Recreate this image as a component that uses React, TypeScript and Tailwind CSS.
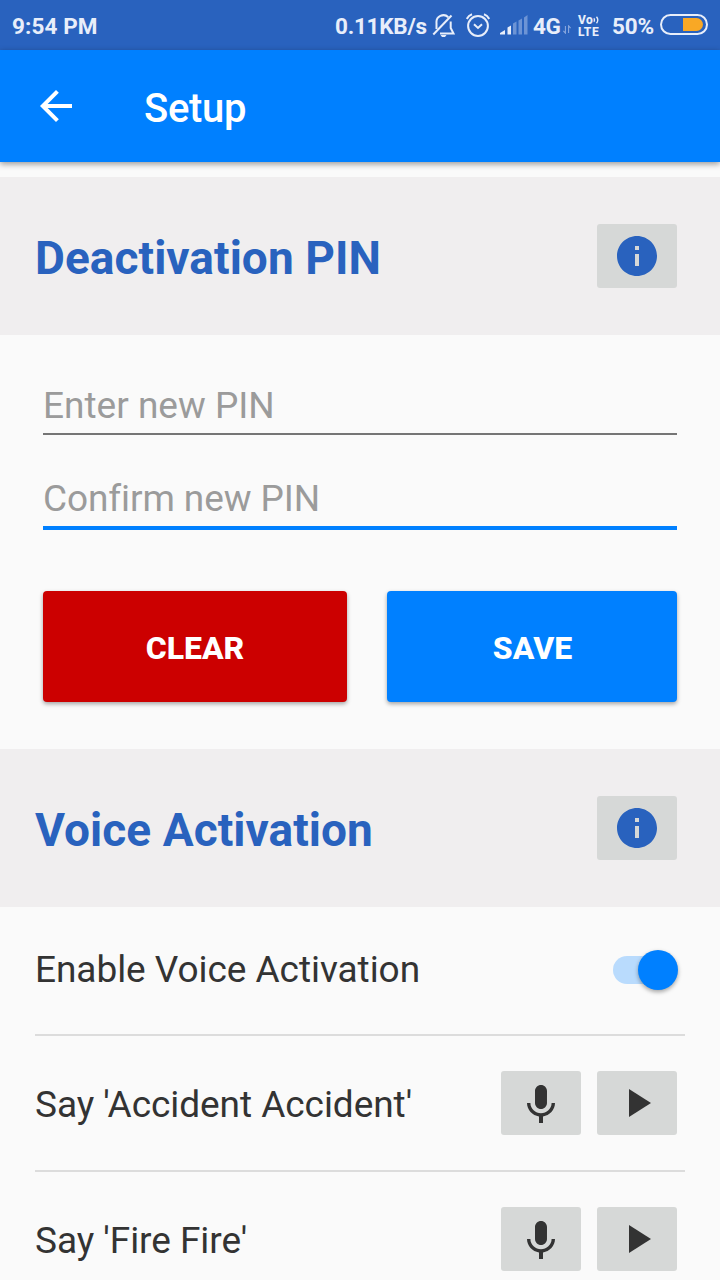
import type { ReactNode } from "react";

function StatusBar() {
  return (
    <div className="flex h-[50px] shrink-0 items-center bg-[#2962be] pr-3 pl-3 text-[22.5px] leading-[50px] font-bold text-[#e8eefa]">
      <span className="w-[323px] shrink-0 pt-px tracking-[0.1px] whitespace-nowrap">9:54 PM</span>
      <span className="w-[97px] shrink-0 pt-px tracking-[-0.25px] whitespace-nowrap">0.11KB/s</span>
      <svg className="mt-px h-[26px] w-6 shrink-0" viewBox="0 0 24 26" fill="none" stroke="#e8eefa" strokeWidth="2">
        <path d="M4.500 16V10a7 7 0 0 1 11.800-5.800M18.700 8.500V15l2.800 5.500H8" />
        <path d="M1.300 21.500 19.500 2.500" />
        <path d="M8.500 22h6l-1.500 2h-3z" fill="#e8eefa" stroke="none" />
      </svg>
      <svg className="ml-[10px] h-[26px] w-6 shrink-0" viewBox="0 0 24 26" fill="none" stroke="#e8eefa" strokeWidth="2">
        <circle cx="12" cy="14" r="9.900" />
        <path d="m8 12.300 4 3.700 4-3.700M.8 7C2 4.500 3.700 3 6 2.200M23.200 7C22 4.500 20.300 3 18 2.200" />
      </svg>
      <svg className="ml-[10px] h-[22px] w-7 shrink-0" viewBox="0 0 28 22">
        <path d="M0 20.500V19l5-3v4.500zM7.500 20.500v-7l3.500-2v9z" fill="#e8eefa" />
        <path d="M13 20.500v-11l3.500-2v13zM18.500 20.500v-14l3.500-2v16zM24 20.500V3.500L27.500 1v19.500z" fill="#6d94d5" />
      </svg>
      <span className="ml-[5px] w-[30px] shrink-0 pt-px tracking-[-0.5px] whitespace-nowrap">4G</span>
      <svg className="mt-[9px] h-[9px] w-[8px] shrink-0" viewBox="0 0 10 10" preserveAspectRatio="none" fill="none" stroke="#8eabe0" strokeWidth="1.300">
        <path d="M.5 6.500 3 9V1M9.500 3.500 7 1v8" />
      </svg>
      <span className="mt-px ml-[7px] flex w-[26px] shrink-0 flex-col font-extrabold">
        <span className="flex h-[12px] items-center text-[12px] leading-[12px] tracking-[0.4px] whitespace-nowrap">
          Vo
          <svg className="mt-px h-[8px] w-[7px] shrink-0" viewBox="0 0 8 9" fill="none" stroke="#e8eefa" strokeWidth="1.500">
            <path d="M1 2.500q1.500 2 0 4M4 .8q3 3.700 0 7.400" />
          </svg>
        </span>
        <span className="h-[12px] text-[12px] leading-[12px] tracking-[0.6px] whitespace-nowrap">LTE</span>
      </span>
      <span className="ml-[8px] w-[48px] shrink-0 pt-px tracking-[-0.1px] whitespace-nowrap">50%</span>
      <span className="mb-px flex h-[21px] w-12 shrink-0 items-center justify-end rounded-full border-2 border-[#e8eefa] pr-[3px]">
        <span className="h-[13px] w-5 rounded-l-[1px] rounded-r-full bg-[#f9a825]" />
      </span>
    </div>
  );
}

function AppBar() {
  return (
    <header className="relative flex h-28 shrink-0 items-center bg-[#0080ff] pl-10 text-white shadow-[0_2px_6px_rgba(0,0,0,0.4)]">
      <svg className="h-8 w-8" viewBox="4 4 16 16" fill="currentColor">
        <path d="M20 11H7.830l5.590-5.590L12 4l-8 8 8 8 1.410-1.410L7.830 13H20v-2z" />
      </svg>
      <h1 className="ml-[72px] pt-[6px] text-[40px] leading-[48px] font-medium tracking-[-0.3px]">Setup</h1>
    </header>
  );
}

function IconButton({ label, children }: { label: string; children: ReactNode }) {
  return (
    <button aria-label={label} className="flex h-16 w-20 items-center justify-center rounded-[3px] bg-[#d6d8d7] text-[#333333]">
      {children}
    </button>
  );
}

function SectionHeader({ title }: { title: string }) {
  return (
    <div className="flex h-[158px] shrink-0 items-center justify-between bg-[#f0eeef] pr-[43px] pl-[35px]">
      <h2 className="pt-1 text-[46px] leading-[54px] font-bold tracking-[0.05px] text-[#2962be]">{title}</h2>
      <IconButton label="Information">
        <svg className="h-12 w-12 text-[#2962be]" viewBox="0 0 24 24" fill="currentColor">
          <path d="M12 2C6.480 2 2 6.480 2 12s4.480 10 10 10 10-4.480 10-10S17.520 2 12 2zm1 15h-2v-6h2v6zm0-8h-2V7h2v2z" />
        </svg>
      </IconButton>
    </div>
  );
}

function VoiceRow({ phrase }: { phrase: string }) {
  return (
    <div className="mx-[35px] flex h-[136px] shrink-0 items-center border-b-2 border-[#dcdcdc] pr-2">
      <span className="flex-1 pt-1 text-[37px] leading-[44px] tracking-[-0.05px] whitespace-nowrap">{phrase}</span>
      <div className="flex gap-4">
        <IconButton label="Record">
          <svg className="h-12 w-12" viewBox="0 0 24 24" fill="currentColor">
            <path d="M12 15c1.660 0 2.990-1.340 2.990-3L15 6c0-1.660-1.340-3-3-3S9 4.340 9 6v6c0 1.660 1.340 3 3 3zm5.300-3c0 3-2.540 5.100-5.300 5.100S6.700 15 6.700 12H5c0 3.420 2.720 6.230 6 6.720V22h2v-3.280c3.280-.490 6-3.300 6-6.720h-1.700z" />
          </svg>
        </IconButton>
        <IconButton label="Play">
          <svg className="h-12 w-12" viewBox="0 0 24 24" fill="currentColor">
            <path d="M8 5v14l11-7z" />
          </svg>
        </IconButton>
      </div>
    </div>
  );
}

export default function App() {
  return (
    <div className="flex h-[1280px] w-[720px] flex-col overflow-hidden bg-[#fafafa] font-['Roboto',sans-serif] text-[#333333]">
      <StatusBar />
      <AppBar />
      <main className="flex flex-col pt-[15px]">
        <SectionHeader title="Deactivation PIN" />
        <div className="flex h-[414px] shrink-0 flex-col pr-[43px] pl-[43px]">
          <input
            aria-label="Enter new PIN"
            placeholder="Enter new PIN"
            className="h-[100px] shrink-0 border-b-2 border-[#757575] pt-[42px] text-[37px] outline-none placeholder:text-[#9b9b9b]"
          />
          <input
            aria-label="Confirm new PIN"
            placeholder="Confirm new PIN"
            className="h-[95px] shrink-0 border-b-4 border-[#0080ff] pt-[35px] text-[37px] tracking-[-0.1px] outline-none placeholder:text-[#9b9b9b]"
          />
          <div className="mt-[61px] flex gap-10 text-[32px] font-extrabold text-white">
            <button className="h-[111px] w-[304px] rounded-[4px] bg-[#cc0000] pt-[3px] shadow-[0_2px_4px_rgba(0,0,0,0.35)]">CLEAR</button>
            <button className="h-[111px] w-[290px] rounded-[4px] bg-[#0080ff] pt-[3px] pl-px shadow-[0_2px_4px_rgba(0,0,0,0.35)]">SAVE</button>
          </div>
        </div>
        <SectionHeader title="Voice Activation" />
        <div className="mx-[35px] flex h-[129px] shrink-0 items-center justify-between border-b-2 border-[#dcdcdc] pr-[7px] pb-px">
          <span className="pb-px text-[37px] leading-[44px] tracking-[-0.05px]">Enable Voice Activation</span>
          <button role="switch" aria-checked="true" aria-label="Enable Voice Activation" className="flex h-7 w-[65px] items-center justify-end rounded-full bg-[linear-gradient(to_right,#b9dbfd_50px,transparent_50px)]">
            <span className="h-10 w-10 shrink-0 rounded-full bg-[#0080ff] shadow-[0_2px_4px_rgba(0,0,0,0.35)]" />
          </button>
        </div>
        <VoiceRow phrase="Say 'Accident Accident'" />
        <VoiceRow phrase="Say 'Fire Fire'" />
      </main>
    </div>
  );
}
